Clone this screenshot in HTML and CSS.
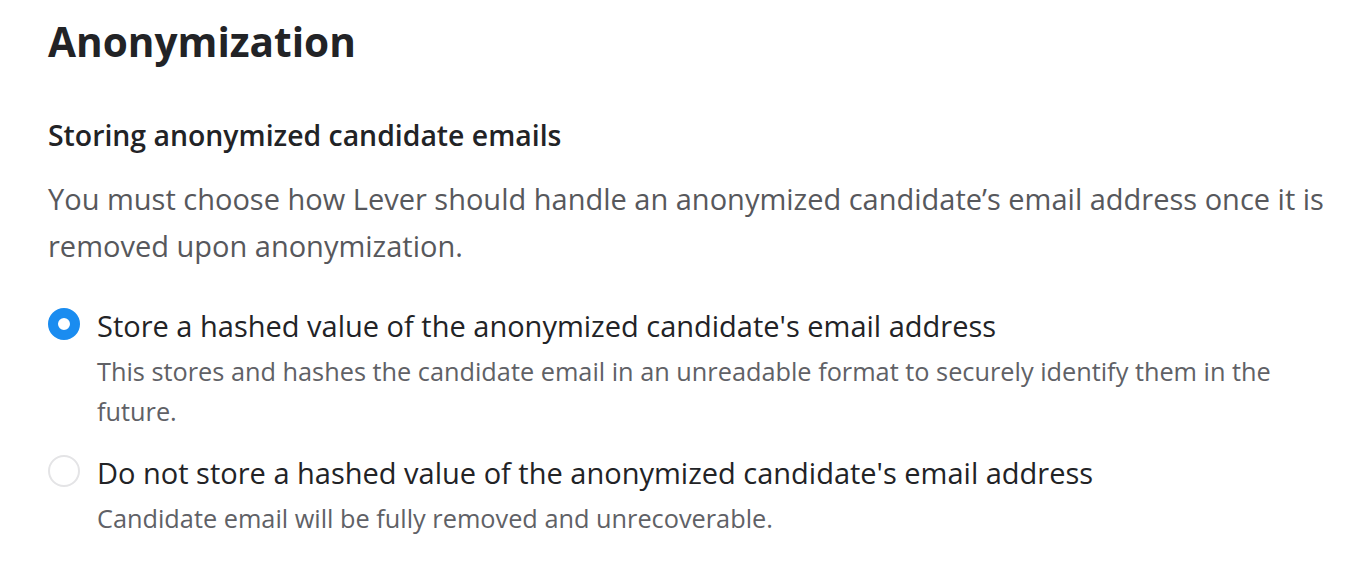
FILE: index.html
```html
<!DOCTYPE html>
<html lang="en">
<head>
    <meta charset="UTF-8">
    <title>Anonymization</title>
    <link rel="stylesheet" href="styles.css">
</head>
<body>
    <div class="page">
        <h1 class="title">Anonymization</h1>

        <section class="setting">
            <h2 class="setting-title">Storing anonymized candidate emails</h2>
            <p class="setting-text">You must choose how Lever should handle an anonymized candidate’s email address once it is removed upon anonymization.</p>

            <div class="options">
                <label class="option">
                    <input type="radio" name="hash" value="store" checked>
                    <span class="radio"></span>
                    <span class="option-body">
                        <span class="option-label">Store a hashed value of the anonymized candidate's email address</span>
                        <span class="option-desc">This stores and hashes the candidate email in an unreadable format to securely identify them in the future.</span>
                    </span>
                </label>
                <label class="option">
                    <input type="radio" name="hash" value="none">
                    <span class="radio"></span>
                    <span class="option-body">
                        <span class="option-label">Do not store a hashed value of the anonymized candidate's email address</span>
                        <span class="option-desc">Candidate email will be fully removed and unrecoverable.</span>
                    </span>
                </label>
            </div>
        </section>
    </div>
</body>
</html>
```

FILE: styles.css
```css
body {
    margin: 0;
    background: #fff;
    font-family: "Open Sans", "Noto Sans", Arial, sans-serif;
    color: #222326;
}

.page {
    padding: 14px 36px 0 48px;
}

.title {
    margin: 0;
    font-size: 40.6px;
    line-height: 56px;
    font-weight: 700;
    color: #222326;
}

.setting-title {
    margin: 47px 0 0;
    font-size: 28.4px;
    line-height: 36px;
    font-weight: 600;
}

.setting-text {
    margin: 22px 0 0;
    font-size: 29px;
    line-height: 47px;
    color: #57585c;
}

.options {
    margin-top: 36px;
    display: flex;
    flex-direction: column;
    gap: 21px;
}

.option {
    display: flex;
    align-items: flex-start;
    gap: 17px;
    cursor: pointer;
}

.option input {
    display: none;
}

.radio {
    flex: none;
    width: 32px;
    height: 32px;
    margin-top: 3px;
    box-sizing: border-box;
    border-radius: 50%;
    border: 2px solid #e4e4e6;
    background: #fff;
}

.option input:checked + .radio {
    border: 10px solid #1a8cf0;
}

.option-body {
    display: flex;
    flex-direction: column;
}

.option-label {
    font-size: 29px;
    line-height: 42px;
}

.option-desc {
    margin-top: 4px;
    font-size: 25.3px;
    line-height: 40px;
    color: #606166;
}
```
